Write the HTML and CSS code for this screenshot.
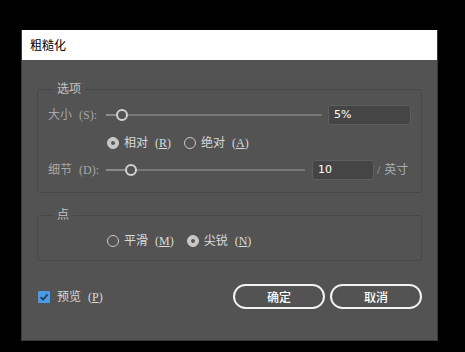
FILE: index.html
```html
<!DOCTYPE html>
<html lang="zh-CN">
<head>
    <meta charset="UTF-8">
    <title>粗糙化</title>
    <link rel="stylesheet" href="styles.css">
</head>
<body>
    <div class="dialog">
        <div class="titlebar">粗糙化</div>

        <div class="content">
            <!-- 选项 -->
            <div class="group group-options">
                <div class="legend">选项</div>

                <div class="row row-field">
                    <span class="label">大小 (S):</span>
                    <div class="slider slider-size">
                        <span class="track-left" style="width: 10px"></span>
                        <span class="thumb"></span>
                        <span class="track-right"></span>
                    </div>
                    <div class="input input-size">5%</div>
                </div>

                <div class="row row-radios">
                    <label class="radio-item"><span class="radio checked"></span><span>相对 (<u>R</u>)</span></label>
                    <label class="radio-item"><span class="radio"></span><span>绝对 (<u>A</u>)</span></label>
                </div>

                <div class="row row-field row-detail">
                    <span class="label">细节 (D):</span>
                    <div class="slider slider-detail">
                        <span class="track-left" style="width: 19px"></span>
                        <span class="thumb"></span>
                        <span class="track-right"></span>
                    </div>
                    <div class="input input-detail">10</div>
                    <span class="unit">/ 英寸</span>
                </div>
            </div>

            <!-- 点 -->
            <div class="group group-points">
                <div class="legend">点</div>
                <div class="row row-radios">
                    <label class="radio-item"><span class="radio"></span><span>平滑 (<u>M</u>)</span></label>
                    <label class="radio-item"><span class="radio checked"></span><span>尖锐 (<u>N</u>)</span></label>
                </div>
            </div>

            <div class="footer">
                <label class="preview">
                    <span class="checkbox">
                        <svg width="12" height="12" viewBox="0 0 12 12">
                            <path d="M2.5 6.2 L5 8.6 L9.6 3.4" fill="none" stroke="#23405f" stroke-width="1.8"/>
                        </svg>
                    </span>
                    <span>预览 (<u>P</u>)</span>
                </label>
                <div class="buttons">
                    <button class="btn">确定</button>
                    <button class="btn">取消</button>
                </div>
            </div>
        </div>
    </div>
</body>
</html>
```

FILE: styles.css
```css
body {
    margin: 0;
    background: #000;
    padding: 30px 0 0 21px;
    font-family: "Liberation Serif", "Noto Sans CJK SC", serif;
    font-size: 12px;
    line-height: 16px;
    word-spacing: 4px;
    height: 352px;
    box-sizing: border-box;
    overflow: hidden;
}

.dialog {
    width: 415px;
    border-left: 1px solid #3a3a3a;
    border-right: 1px solid #3a3a3a;
    border-bottom: 1px solid #3a3a3a;
}

.titlebar {
    height: 30px;
    background: #fff;
    color: #000;
    padding-left: 8px;
    line-height: 30px;
    font-family: "Noto Sans CJK SC", sans-serif;
    font-size: 12px;
}

.content {
    background: #535353;
    height: 280px;
    padding: 29px 15px 0 15px;
    box-sizing: border-box;
}

.group {
    border: 1px solid #484848;
    border-radius: 3px;
    padding: 0 9px 0 10px;
}

.group-options {
    padding-bottom: 12px;
}

.group-points {
    margin-top: 22px;
    padding-bottom: 11px;
}

.legend {
    margin: -9px 0 0 5px;
    padding: 0 4px;
    width: fit-content;
    height: 16px;
    background: #535353;
    color: #c4c4c4;
}

.row {
    display: flex;
    align-items: center;
}

.row-field {
    height: 20px;
    margin-top: 8px;
}

.row-detail {
    margin-top: 9px;
}

.row-radios {
    height: 16px;
    margin-top: 10px;
    padding-left: 59px;
    gap: 13px;
}

.label {
    width: 58px;
    color: #a8a8a8;
    white-space: nowrap;
}

.slider {
    display: flex;
    align-items: center;
    height: 12px;
}

.slider-size {
    width: 216px;
}

.slider-detail {
    width: 199px;
}

.track-left {
    height: 2px;
    background: #8a8a8a;
}

.track-right {
    flex: 1;
    height: 2px;
    background: #767676;
}

.thumb {
    width: 8px;
    height: 8px;
    border: 2px solid #d2d2d2;
    border-radius: 50%;
    background: #535353;
}

.input {
    height: 20px;
    box-sizing: border-box;
    background: #454545;
    border: 1px solid #5e5e5e;
    border-radius: 3px;
    color: #fff;
    padding: 1px 0 0 5px;
    font-family: "DejaVu Sans", sans-serif;
    font-size: 11px;
}

.input-size {
    width: 83px;
    margin-left: 6px;
}

.input-detail {
    width: 62px;
    margin-left: 7px;
}

.unit {
    margin-left: 3px;
    color: #a4abb3;
    word-spacing: 1px;
}

.radio-item {
    display: flex;
    align-items: center;
    gap: 5px;
    color: #dadada;
    white-space: nowrap;
}

.radio {
    width: 10px;
    height: 10px;
    border: 1.5px solid #c8c8c8;
    border-radius: 50%;
    box-sizing: content-box;
}

.radio.checked {
    background: #c8c8c8;
    position: relative;
}

.radio.checked::after {
    content: "";
    position: absolute;
    left: 3px;
    top: 3px;
    width: 4px;
    height: 4px;
    border-radius: 50%;
    background: #555;
}

u {
    text-decoration: underline;
    text-underline-offset: 1px;
}

.footer {
    display: flex;
    align-items: center;
    justify-content: space-between;
    margin-top: 23px;
    padding-left: 1px;
}

.preview {
    display: flex;
    align-items: center;
    gap: 7px;
    color: #dadada;
}

.checkbox {
    width: 12px;
    height: 12px;
    background: #4b9ae6;
    border-radius: 1px;
    display: flex;
}

.buttons {
    display: flex;
    gap: 5px;
}

.btn {
    width: 92px;
    height: 25px;
    border: 2px solid #f2f2f2;
    border-radius: 13px;
    background: #535353;
    color: #fff;
    font-family: "Noto Sans CJK SC", sans-serif;
    font-size: 12px;
    font-weight: 500;
    padding: 0;
}
```
